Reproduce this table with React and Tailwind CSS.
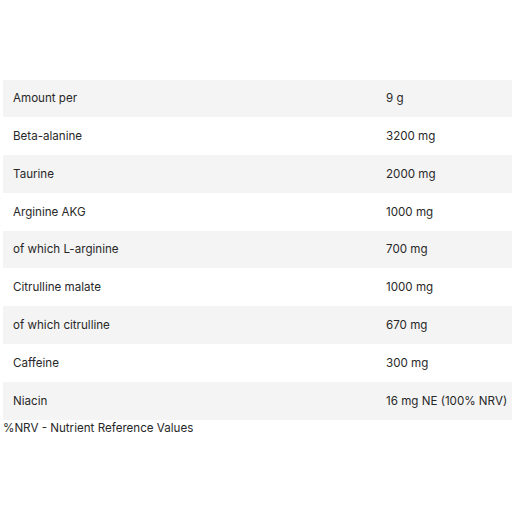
import React from "react";

const rows = [
  ["Amount per", "9 g"],
  ["Beta-alanine", "3200 mg"],
  ["Taurine", "2000 mg"],
  ["Arginine AKG", "1000 mg"],
  ["of which L-arginine", "700 mg"],
  ["Citrulline malate", "1000 mg"],
  ["of which citrulline", "670 mg"],
  ["Caffeine", "300 mg"],
  ["Niacin", "16 mg NE (100% NRV)"],
];

export default function App() {
  return (
    <div className="w-[512px] h-[512px] bg-white text-[#282828] text-[11.6px]" style={{ fontFamily: "Inter, sans-serif" }}>
      <div className="pt-[79.5px] pl-[3px]">
        {rows.map(([a, b], i) => (
          <div key={i} className={`flex items-center pt-[1px] h-[37.8px] ${i % 2 === 0 ? "bg-[#f4f4f4]" : "bg-white"}`}>
            <div className="w-[383px] pl-[10px]">{a}</div>
            <div>{b}</div>
          </div>
        ))}
        <div className="leading-[15px] pt-[1px]">%NRV - Nutrient Reference Values</div>
      </div>
    </div>
  );
}
